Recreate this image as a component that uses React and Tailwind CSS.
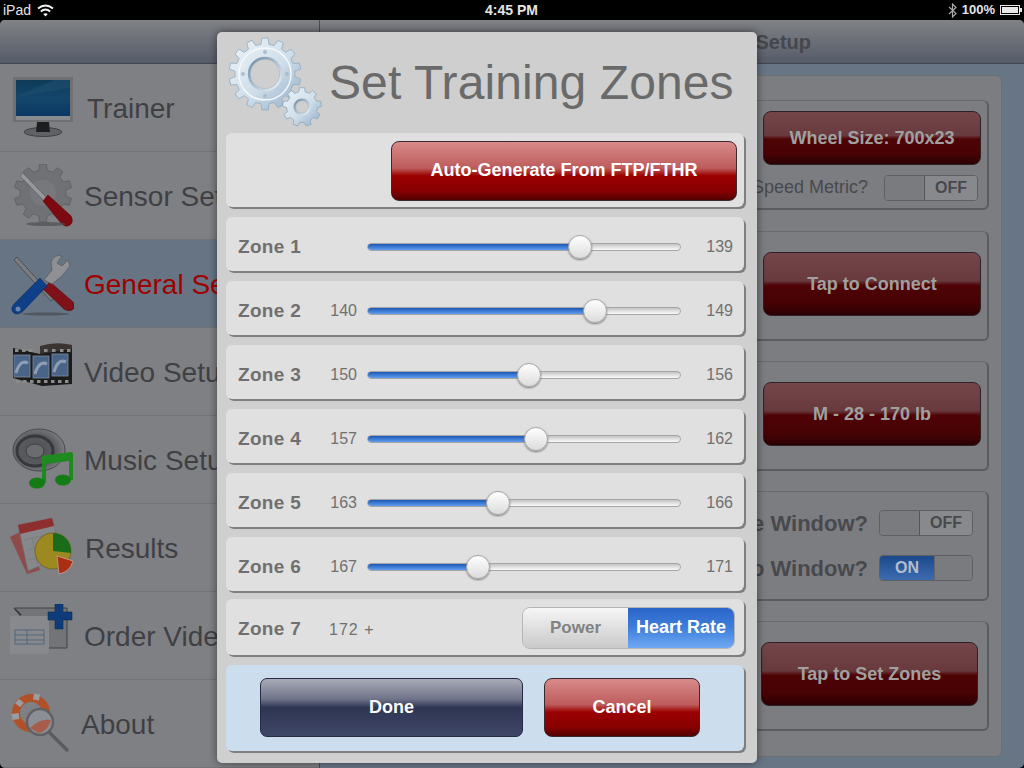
const FONT = { fontFamily: '"Liberation Sans", Arial, sans-serif' }

// ─── Icons ────────────────────────────────────────────────────────────────────

function gearPath(cx, cy, outer, root, hole, teeth) {
  const step = (Math.PI * 2) / teeth
  let d = ''
  for (let i = 0; i < teeth; i++) {
    const a = i * step - Math.PI / 2
    const pts = [
      [root, a - step * 0.3],
      [outer, a - step * 0.19],
      [outer, a + step * 0.19],
      [root, a + step * 0.3],
    ]
    pts.forEach(([r, t], j) => {
      const x = (cx + r * Math.cos(t)).toFixed(1)
      const y = (cy + r * Math.sin(t)).toFixed(1)
      d += `${i === 0 && j === 0 ? 'M' : 'L'}${x} ${y} `
    })
  }
  d += 'Z '
  d += `M${cx + hole} ${cy} A${hole} ${hole} 0 1 0 ${cx - hole} ${cy} A${hole} ${hole} 0 1 0 ${cx + hole} ${cy} Z`
  return d
}

function GearsIcon() {
  return (
    <svg width="96" height="92" viewBox="0 0 96 92" className="shrink-0">
      <defs>
        <linearGradient id="steel" x1="0" y1="0" x2="1" y2="1">
          <stop offset="0" stopColor="#eef4f9" />
          <stop offset="0.55" stopColor="#cfdeea" />
          <stop offset="1" stopColor="#8fadc6" />
        </linearGradient>
        <linearGradient id="steelRing" x1="0" y1="0" x2="1" y2="1">
          <stop offset="0" stopColor="#6f8ba3" />
          <stop offset="1" stopColor="#f0f5f9" />
        </linearGradient>
      </defs>
      <path d={gearPath(39, 37, 36, 30, 15, 14)} fill="url(#steel)" fillRule="evenodd" stroke="#8fabc2" strokeWidth="0.8" />
      <circle cx="39" cy="37" r="26" fill="none" stroke="#f7fafc" strokeWidth="1.4" />
      <circle cx="39" cy="37" r="16" fill="none" stroke="url(#steelRing)" strokeWidth="2.4" />
      {[[39, 15], [61, 37], [39, 59], [17, 37]].map(([x, y]) => (
        <circle key={`${x}-${y}`} cx={x} cy={y} r="2" fill="#a9bfd0" />
      ))}
      <path d={gearPath(76, 70, 19.5, 15.5, 6.5, 9)} fill="url(#steel)" fillRule="evenodd" stroke="#8aa7be" strokeWidth="0.8" />
      <circle cx="76" cy="70" r="7.5" fill="none" stroke="url(#steelRing)" strokeWidth="2" />
    </svg>
  )
}

function MonitorIcon() {
  return (
    <svg width="64" height="64" viewBox="0 0 64 64">
      <defs>
        <linearGradient id="screen" x1="0" y1="0" x2="0" y2="1">
          <stop offset="0" stopColor="#0e3a58" />
          <stop offset="0.5" stopColor="#14466a" />
          <stop offset="1" stopColor="#0a3864" />
        </linearGradient>
      </defs>
      <rect x="3" y="1" width="60" height="45" fill="#6f7072" />
      <rect x="6" y="4" width="54" height="36" fill="url(#screen)" />
      <path d="M6 21 L60 12 L60 4 L44 4 Z" fill="#1f5070" opacity="0.6" />
      <rect x="6" y="40" width="54" height="4" fill="#8a8b8e" />
      <ellipse cx="33" cy="56" rx="19" ry="4.5" fill="#606164" stroke="#404144" />
      <path d="M27 46 H39 L40 56 H26 Z" fill="#1e1e20" />
    </svg>
  )
}

function SensorIcon() {
  return (
    <svg width="64" height="64" viewBox="0 0 64 64">
      <path d={gearPath(33, 29, 29, 23, 10, 10)} fill="#707174" fillRule="evenodd" stroke="#626366" />
      <circle cx="33" cy="29" r="13" fill="#77787b" />
      <path d="M10 12 L13 9 L38 35 L35 38 Z" fill="#97989b" stroke="#55565a" strokeWidth="0.6" />
      <path d="M33 37 L38 31 L61 52 Q64 58 60 61 Q55 64 51 59 Z" fill="#7c0a10" stroke="#5d060a" strokeWidth="0.6" />
      <ellipse cx="36" cy="60" rx="20" ry="2" fill="#4e4f52" opacity="0.7" />
    </svg>
  )
}

function GeneralIcon() {
  return (
    <svg width="64" height="64" viewBox="0 0 64 64">
      <path d="M4 8 L7 5 L44 46 L41 49 Z" fill="#7b7c7f" stroke="#35363a" strokeWidth="0.6" />
      <path d="M33 37 L40 30 L63 50 Q66 56 62 58 Q58 60 54 57 Z" fill="#7f1118" stroke="#55080c" strokeWidth="0.6" />
      <path d="M42 32 L52 24 L60 14 L58 8 L52 14 L47 11 L52 4 Q44 2 41 10 L42 18 L34 28 Z" fill="#8f9093" stroke="#505155" strokeWidth="0.6" />
      <path d="M30 26 L37 34 L12 60 Q6 64 3 60 Q0 56 5 51 Z" fill="#0f3f86" stroke="#0a2a5c" strokeWidth="0.6" />
      <circle cx="8" cy="57" r="2.5" fill="#6d85a8" />
      <ellipse cx="36" cy="62" rx="24" ry="1.5" fill="#484a50" opacity="0.7" />
    </svg>
  )
}

function VideoIcon() {
  const frames = [[4, 15], [23, 16], [42, 14]]
  return (
    <svg width="64" height="64" viewBox="0 0 64 64">
      <path d="M30 6 Q46 1 62 5 V40 H30 Z" fill="#3b3430" />
      <path d="M3 8 L30 14 L62 9 V44 L32 46 L3 38 Z" fill="#1c1b1c" />
      {frames.map(([x, y]) => (
        <g key={x}>
          <rect x={x} y={y} width="16" height="22" fill="#4a6488" stroke="#7d8aa0" strokeWidth="0.8" />
          <path d={`M${x + 2} ${y + 18} Q${x + 6} ${y + 4} ${x + 14} ${y + 8}`} fill="none" stroke="#8d9db4" strokeWidth="3" />
        </g>
      ))}
      {[6, 13, 20, 27, 34, 41, 48, 55].map(x => (
        <rect key={x} x={x} y="40" width="3.5" height="3" fill="#8c8c8c" />
      ))}
      {[5, 12, 19, 34, 42, 50, 57].map(x => (
        <rect key={x} x={x} y="9" width="3.5" height="3" fill="#8c8c8c" />
      ))}
    </svg>
  )
}

function MusicIcon() {
  return (
    <svg width="64" height="64" viewBox="0 0 64 64">
      <defs>
        <radialGradient id="speaker" cx="0.45" cy="0.5" r="0.6">
          <stop offset="0" stopColor="#505154" />
          <stop offset="0.6" stopColor="#5a5b5e" />
          <stop offset="1" stopColor="#85868a" />
        </radialGradient>
      </defs>
      <ellipse cx="29" cy="22" rx="26" ry="21" fill="url(#speaker)" stroke="#48494c" />
      <ellipse cx="25" cy="23" rx="18" ry="15" fill="none" stroke="#37383b" strokeWidth="3" />
      <ellipse cx="25" cy="23" rx="9" ry="7" fill="#6b6c70" stroke="#404144" />
      <path d="M32 28 L61 24 Q63 24 63 26 V52 L59 52 V33 L36 36 V55 L32 55 Z" fill="#1f8a1f" />
      <ellipse cx="27" cy="55" rx="8" ry="5.5" fill="#157c15" />
      <ellipse cx="53" cy="52" rx="8" ry="5.5" fill="#157c15" />
    </svg>
  )
}

function ResultsIcon() {
  return (
    <svg width="64" height="64" viewBox="0 0 64 64">
      <path d="M0 21 L12 15 L30 54 L17 58 Z" fill="#8f4b4b" />
      <path d="M8 9 L42 2 L52 40 L18 55 Z" fill="#87888b" stroke="#6d6e72" strokeWidth="0.6" />
      <path d="M8 9 L42 2 L44 10 L10 18 Z" fill="#8e2e2e" />
      <path d="M14 24 L46 17 M17 34 L48 27 M19 44 L40 38 M22 21 L28 50 M32 18 L38 44" stroke="#77787b" strokeWidth="0.7" />
      <circle cx="43" cy="35" r="18" fill="#9c8a20" stroke="#6d6020" strokeWidth="0.8" />
      <path d="M43 35 L43 17 A18 18 0 0 1 61 37 Z" fill="#1a6c1a" />
      <path d="M47 40 L63 45 A18 18 0 0 1 49 58 Z" fill="#a92e14" stroke="#c9a090" strokeWidth="0.8" />
    </svg>
  )
}

function OrderIcon() {
  return (
    <svg width="64" height="64" viewBox="0 0 64 64">
      <path d="M4 4 H57 V44 H36 Z" fill="#737477" stroke="#414245" strokeWidth="1" />
      <path d="M5 5 L11 11" stroke="#36373a" strokeWidth="1.4" />
      <path d="M0 12 H39 V47 Q39 50 35 50 H0 Z" fill="#88898c" />
      <rect x="5" y="26" width="29" height="14" fill="none" stroke="#3e5a7a" strokeWidth="0.7" />
      <path d="M5 31 H34 M17 26 V40 M5 36 H34" stroke="#3e5a7a" strokeWidth="0.7" />
      <path d="M45 0 H53 V8 H62 V16 H53 V25 H45 V16 H38 V8 H45 Z" fill="#0f3c78" stroke="#0a2c5c" strokeWidth="0.6" />
    </svg>
  )
}

function AboutIcon() {
  return (
    <svg width="64" height="64" viewBox="0 0 64 64">
      <circle cx="21" cy="21" r="15" fill="none" stroke="#b0512a" strokeWidth="8" />
      <path d="M7 9 L12 13 M27 2 L26 8 M2 25 L9 24" stroke="#9b9c9f" strokeWidth="6" />
      <circle cx="30" cy="30" r="13" fill="#8c8e96" stroke="#606165" strokeWidth="2.5" />
      <path d="M20 36 Q30 26 41 28 Q38 40 28 41 Z" fill="#a85d4c" />
      <path d="M40 41 L57 58" stroke="#5a5b5e" strokeWidth="3.5" strokeLinecap="round" />
    </svg>
  )
}

function WifiIcon() {
  return (
    <svg width="17" height="13" viewBox="0 0 17 13" fill="none" stroke="#f2f2f2" strokeWidth="2">
      <path d="M1 4.5 Q8.5 -1.5 16 4.5" />
      <path d="M3.8 7.5 Q8.5 3.6 13.2 7.5" />
      <path d="M8.5 12.5 L6.2 10 Q8.5 8.4 10.8 10 Z" fill="#f2f2f2" stroke="none" />
    </svg>
  )
}

function BluetoothIcon() {
  return (
    <svg width="9" height="15" viewBox="0 0 9 15" fill="none" stroke="#a8a8a8" strokeWidth="1.2">
      <path d="M1 4 L8 10.5 L4.5 14 V1 L8 4.5 L1 11" />
    </svg>
  )
}

function BatteryIcon() {
  return (
    <div className="flex items-center">
      <div className="w-[20px] h-[10px] border border-[#e8e8e8] p-px">
        <div className="w-full h-full bg-[#e8e8e8]" />
      </div>
      <div className="w-[2px] h-[4px] bg-[#e8e8e8]" />
    </div>
  )
}

// ─── Data ─────────────────────────────────────────────────────────────────────

const MENU = [
  { label: 'Trainer', Icon: MonitorIcon, gap: 13 },
  { label: 'Sensor Setup', Icon: SensorIcon, gap: 10 },
  { label: 'General Setup', Icon: GeneralIcon, gap: 10, active: true },
  { label: 'Video Setup', Icon: VideoIcon, gap: 10 },
  { label: 'Music Setup', Icon: MusicIcon, gap: 10 },
  { label: 'Results', Icon: ResultsIcon, gap: 11 },
  { label: 'Order Videos', Icon: OrderIcon, gap: 10 },
  { label: 'About', Icon: AboutIcon, gap: 7 },
]

const ZONES = [
  { name: 'Zone 1', min: '', max: '139', thumb: 212 },
  { name: 'Zone 2', min: '140', max: '149', thumb: 227 },
  { name: 'Zone 3', min: '150', max: '156', thumb: 161 },
  { name: 'Zone 4', min: '157', max: '162', thumb: 168 },
  { name: 'Zone 5', min: '163', max: '166', thumb: 130 },
  { name: 'Zone 6', min: '167', max: '171', thumb: 110 },
]

// ─── Background ───────────────────────────────────────────────────────────────

function StatusBar() {
  return (
    <div className="h-[20px] bg-black text-[#e4e4e4] flex items-center pl-[3px] pr-[2px] text-[14px]">
      <div className="w-[482px] flex items-center gap-[6px]">
        <span>iPad</span>
        <WifiIcon />
      </div>
      <span className="font-bold text-[14px]">4:45 PM</span>
      <div className="ml-auto flex items-center gap-[5px]">
        <BluetoothIcon />
        <span className="font-bold text-[13px]">100%</span>
        <BatteryIcon />
      </div>
    </div>
  )
}

function Sidebar() {
  return (
    <div className="w-[320px] shrink-0 flex flex-col bg-[#7f8084] rounded-l-[5px] overflow-hidden border-r border-[#4a4b50]">
      <div className="h-[44px] bg-gradient-to-b from-[#808285] to-[#565b69] border-b border-[#43464f]" />
      {MENU.map(({ label, Icon, gap, active }) => (
        <div
          key={label}
          className={`h-[88px] flex items-center pl-[10px] border-b border-[#737478] whitespace-nowrap ${active ? 'bg-[#667484] text-[#a00000]' : 'text-[#3f4044]'}`}
        >
          <Icon />
          <span className="text-[28px] mt-[2px]" style={{ marginLeft: gap }}>{label}</span>
        </div>
      ))}
    </div>
  )
}

function RedButton({ label, width, height, dim }) {
  return (
    <button
      className={`rounded-[8px] border font-bold text-[18px] ${dim
        ? 'text-[#a0a0a0] border-[#2c2226] bg-[linear-gradient(#74464a_0%,#683a3e_45%,#4e0305_52%,#480204_80%,#2c0003_100%)]'
        : 'text-white border-[#3a2a30] bg-[linear-gradient(#d98a8a_0%,#bd5c5c_45%,#9c0000_58%,#860000_85%,#520000_100%)]'}`}
      style={{ width, height }}
    >
      {label}
    </button>
  )
}

function Toggle({ on }) {
  if (on) {
    return (
      <div className="w-[94px] h-[26px] rounded-[4px] border border-[#5e5f63] flex overflow-hidden">
        <div className="w-[54px] bg-[linear-gradient(#1b4a8c,#3c6cb0)] text-[#b4bccb] font-bold text-[16px] flex items-center justify-center">ON</div>
        <div className="flex-1 bg-[#7a7b7f] border-l border-[#64656a]" />
      </div>
    )
  }
  return (
    <div className="w-[94px] h-[26px] rounded-[4px] border border-[#5e5f63] flex overflow-hidden">
      <div className="w-[40px] bg-[#7a7b7f] border-r border-[#55565a]" />
      <div className="flex-1 bg-[#88898c] text-[#48494d] font-bold text-[16px] flex items-center justify-center">OFF</div>
    </div>
  )
}

function Section({ children, height = 110, pr = 6, pb = 3, pt = 0, gap = 0 }) {
  return (
    <div
      className="w-[640px] rounded-[6px] bg-[#7c7d81] border-t border-[#696a6e] border-r-2 border-b-2 border-r-[#5b5c60] border-b-[#5b5c60] flex flex-col justify-center items-end"
      style={{ height, paddingRight: pr, paddingBottom: pb, paddingTop: pt, gap }}
    >
      {children}
    </div>
  )
}

function SetupPanel() {
  return (
    <div className="flex-1 flex flex-col bg-[#677585] rounded-r-[5px] overflow-hidden">
      <div className="h-[44px] shrink-0 bg-gradient-to-b from-[#808285] to-[#565b69] border-b border-[#43464f] flex items-center justify-end pr-[213px] text-[20px] font-bold text-[#45474d] whitespace-nowrap">
        General Setup
      </div>
      <div className="mt-[11px] ml-[20px] w-[662px] h-[682px] rounded-[6px] bg-[#7c7d80] border border-[#6d6e72] pt-[24px] pl-[8px] flex flex-col gap-[20px]">
        <div className="flex flex-col gap-[21px]">
          <Section height={110} gap={9} pb={0} pt={3}>
            <RedButton label="Wheel Size: 700x23" width={218} height={54} dim />
            <div className="flex items-center gap-[16px] pr-[3px] text-[#48494d] text-[18px]">
              <span>Speed Metric?</span>
              <Toggle />
            </div>
          </Section>
          <Section><RedButton label="Tap to Connect" width={218} height={64} dim /></Section>
        </div>
        <Section><RedButton label="M - 28 - 170 lb" width={218} height={64} dim /></Section>
        <Section pr={14} pb={0} gap={12}>
          <div className="flex items-center gap-[11px] text-[#48494d] text-[22px] font-bold">
            <span>Profile Window?</span>
            <Toggle />
          </div>
          <div className="flex items-center gap-[11px] text-[#48494d] text-[22px] font-bold">
            <span>Video Window?</span>
            <Toggle on />
          </div>
        </Section>
        <Section pr={9}><RedButton label="Tap to Set Zones" width={217} height={64} dim /></Section>
      </div>
    </div>
  )
}

// ─── Modal ────────────────────────────────────────────────────────────────────

function Card({ children, className = '', height = 54 }) {
  return (
    <div
      className={`rounded-[6px] flex items-center shadow-[2px_2px_0_#7f7f7f] ${className}`}
      style={{ height }}
    >
      {children}
    </div>
  )
}

function Slider({ thumb }) {
  return (
    <div className="relative w-[314px] h-[8px] shrink-0 rounded-full border border-[#a6a6a6] bg-[linear-gradient(#c4c4c4,#fbfbfb)] ml-[10px]">
      <div
        className="h-full rounded-full bg-[linear-gradient(#1d57b8,#5f9ceb)]"
        style={{ width: thumb }}
      />
      <div
        className="absolute top-[-9px] w-[24px] h-[24px] -ml-[12px] rounded-full border border-[#a8a8a8] bg-[linear-gradient(#ffffff,#dcdcdc)] shadow-[0_1px_2px_#777]"
        style={{ left: thumb }}
      />
    </div>
  )
}

function ZoneRow({ zone }) {
  return (
    <Card className="bg-[#e0e0e0] pl-[12px] pr-[11px] pt-[5px] text-[#707070]">
      <span className="w-[80px] shrink-0 mt-px font-bold text-[19px] tracking-[0.3px]">{zone.name}</span>
      <span className="w-[39px] shrink-0 mt-px text-right text-[16px]">{zone.min}</span>
      <Slider thumb={zone.thumb} />
      <span className="flex-1 mt-px text-right text-[16px]">{zone.max}</span>
    </Card>
  )
}

function ZonesModal() {
  return (
    <div className="absolute left-[217px] top-[32px] w-[540px] h-[731px] rounded-[5px] bg-[#cfcfcf] pl-[9px] pr-[13px] shadow-[0_0_8px_rgba(0,0,0,0.5)] flex flex-col">
      <div className="h-[101px] shrink-0 flex items-center gap-[7px] text-[#6a6a6a]">
        <GearsIcon />
        <h1 className="text-[48px] font-normal tracking-[0.1px] whitespace-nowrap">Set Training Zones</h1>
      </div>
      <div className="flex flex-col gap-[10px]">
        <Card height={74} className="bg-[#e0e0e0] justify-end pr-[7px] pt-[1px]">
          <RedButton label="Auto-Generate From FTP/FTHR" width={346} height={60} />
        </Card>
        {ZONES.map(zone => <ZoneRow key={zone.name} zone={zone} />)}
        <Card height={56} className="-mt-[2px] bg-[#e0e0e0] pl-[12px] pr-[9px] pt-[1px] text-[#707070]">
          <span className="w-[91px] shrink-0 pt-[4px] font-bold text-[19px] tracking-[0.3px]">Zone 7</span>
          <span className="pt-[4px] text-[16px] tracking-[1px]">172 +</span>
          <div className="ml-auto w-[213px] h-[42px] flex rounded-[8px] border border-[#b5b5b5] overflow-hidden">
            <div className="w-[105px] bg-[linear-gradient(#f6f6f6,#c9c9c9)] text-[#828282] font-bold text-[17px] flex items-center justify-center">Power</div>
            <div className="flex-1 bg-[linear-gradient(#2a64c8_0%,#3f7fdc_50%,#6fa9f3_100%)] text-white font-bold text-[18px] flex items-center justify-center">Heart Rate</div>
          </div>
        </Card>
        <Card height={86} className="bg-[#ccdeee] pl-[34px] pb-[1px] gap-[21px]">
          <button className="w-[263px] h-[59px] rounded-[7px] border border-[#252b45] text-white font-bold text-[18px] bg-[linear-gradient(#a9abb7_0%,#70748a_35%,#2f3654_50%,#3f4766_100%)]">
            Done
          </button>
          <RedButton label="Cancel" width={156} height={59} />
        </Card>
      </div>
    </div>
  )
}

// ─── Page ─────────────────────────────────────────────────────────────────────

export default function App() {
  return (
    <div className="relative w-[1024px] h-[768px] overflow-hidden bg-black" style={FONT}>
      <StatusBar />
      <div className="flex h-[748px]">
        <Sidebar />
        <SetupPanel />
      </div>
      <ZonesModal />
    </div>
  )
}
